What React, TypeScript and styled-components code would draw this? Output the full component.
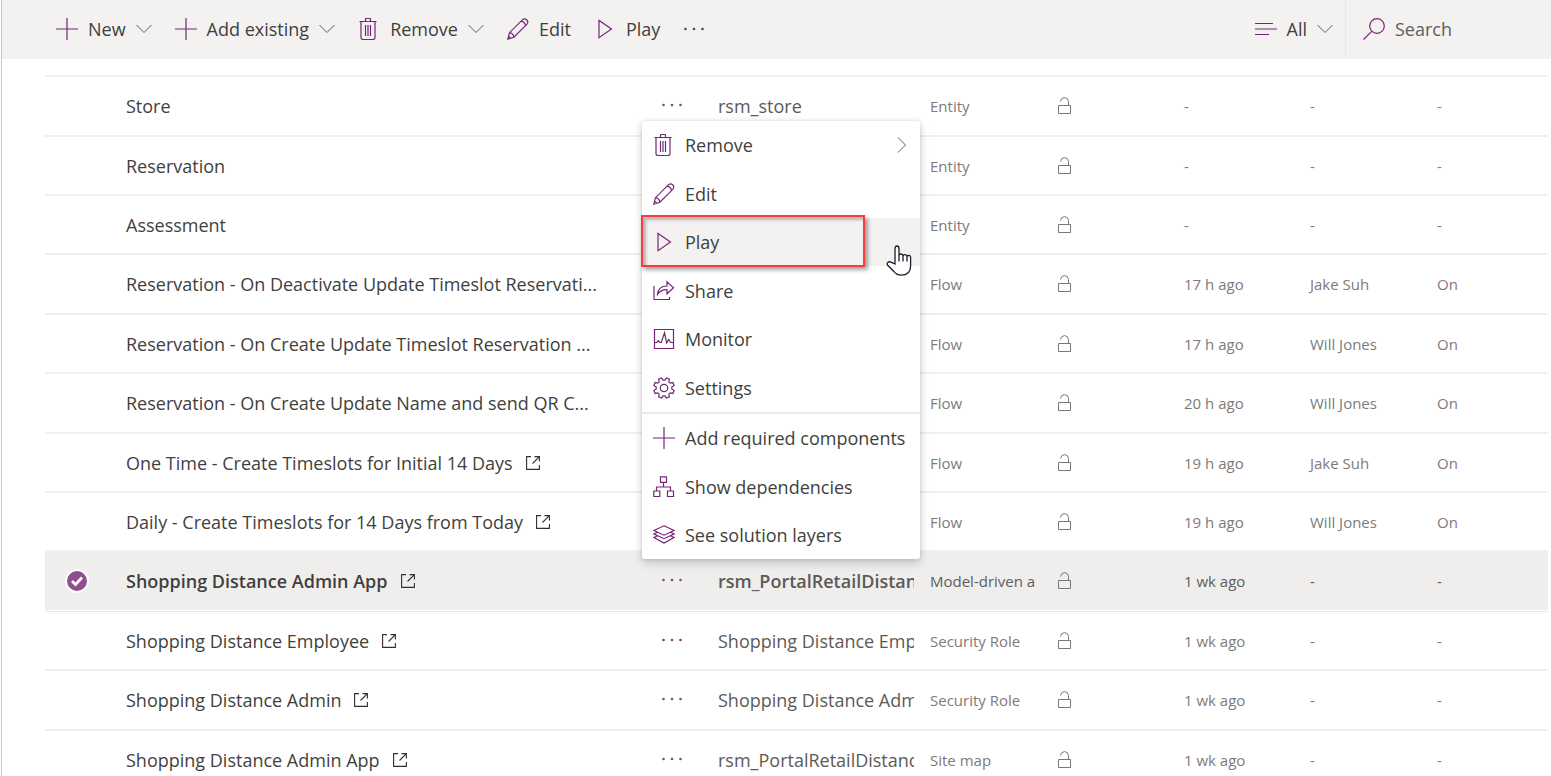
import React from "react";
import styled, { createGlobalStyle, css } from "styled-components";

const GlobalStyle = createGlobalStyle`
  *, *::before, *::after { box-sizing: border-box; }
  body {
    margin: 0;
    background: #fff;
    color: #413f3e;
    font-family: "Open Sans", "Noto Sans", sans-serif;
    font-size: 18px;
    line-height: 24px;
  }
  button, input {
    font: inherit;
    color: inherit;
    border: 0;
    padding: 0;
    margin: 0;
    background: none;
  }
  button { cursor: pointer; }
`;

const PURPLE = "#742774";

const Page = styled.div`
  min-height: 100vh;
  margin-left: 1px;
  border-left: 1px solid #c8c6c4;
`;

const Toolbar = styled.header`
  display: flex;
  align-items: stretch;
  justify-content: space-between;
  height: 59px;
  padding: 0 0 1px 54px;
  background: #f3f2f1;
`;

const Commands = styled.nav`
  display: flex;
  align-items: center;
  gap: 23px;
`;

const Command = styled.button`
  display: flex;
  align-items: center;
  gap: 10px;
  white-space: nowrap;
`;

const Filters = styled.div`
  display: flex;
`;

const FilterButton = styled(Command)`
  padding-right: 12px;
`;

const SearchBox = styled.label`
  display: flex;
  align-items: center;
  gap: 10px;
  width: 206px;
  padding-left: 17px;
  border-left: 1px solid #e8e6e4;
`;

const SearchInput = styled.input`
  width: 140px;
  outline: none;
  &::placeholder { color: #605e5c; opacity: 1; }
`;

const Content = styled.main`
  padding: 16px 3px 0 43px;
  overflow: clip;
  max-height: calc(100vh - 59px);
`;

const Table = styled.table`
  width: 100%;
  table-layout: fixed;
  border-collapse: separate;
  border-spacing: 0;
  border-top: 2px solid #f0efee;
`;

const Col = styled.col<{ $w?: number }>`
  ${(p) => p.$w && css`width: ${p.$w}px;`}
`;

const Cell = styled.td`
  padding: 0;
  vertical-align: middle;
  white-space: nowrap;
  border-bottom: 2px solid #f0efee;
`;

const Row = styled.tr<{ $selected?: boolean }>`
  height: 59px;
  &:nth-child(5n + 1), &:nth-child(5n + 4) { height: 60px; }
  ${(p) => p.$selected && css`
    font-weight: 600;
    & > ${Cell} {
      padding-bottom: 1px;
      border-bottom: 1px solid #edebe9;
      background: #efeeec;
      box-shadow: inset 0 -1px #fff;
    }
  `}
`;

const NameCell = styled(Cell)`
  & svg { margin-left: 13px; }
`;

const NameLink = styled.a`
  color: inherit;
  text-decoration: none;
`;

const MoreCell = styled(Cell)`
  position: relative;
`;

const MoreButton = styled.button`
  display: flex;
  align-items: center;
  justify-content: center;
  width: 44px;
  height: 28px;
  padding-bottom: 2px;
`;

const Clip = styled.span`
  display: block;
  width: 196px;
  overflow: hidden;
  color: #5c5a58;
`;

const MetaCell = styled(Cell)<{ $dark?: boolean }>`
  font-size: 15px;
  font-weight: 400;
  color: ${(p) => (p.$dark ? "#605e5c" : "#7d7b79")};
  & > svg { display: block; }
`;

const Check = styled.input`
  appearance: none;
  display: block;
  width: 24px;
  height: 24px;
  margin-left: 20px;
  border-radius: 50%;
  &:checked {
    border: 2px solid #fff;
    background: #8f4e8f url("data:image/svg+xml,%3Csvg xmlns='http://www.w3.org/2000/svg' viewBox='0 0 20 20'%3E%3Cpath d='M5 10l3.500 3.500 6.500-7' fill='none' stroke='white' stroke-width='2.800'/%3E%3C/svg%3E") center / 20px 20px no-repeat;
  }
`;

const Menu = styled.div`
  position: absolute;
  left: -8px;
  bottom: 52px;
  z-index: 2;
  width: 278px;
  border-radius: 3px;
  background: #fff;
  font-weight: 400;
  box-shadow: 0 4px 10px rgba(0, 0, 0, 0.18), 0 0 4px rgba(0, 0, 0, 0.12);
`;

const MenuGroup = styled.ul`
  list-style: none;
  margin: 0;
  padding: 0;
  & + & { border-top: 2px solid #eae9e8; }
`;

const MenuItem = styled.li<{ $active?: boolean }>`
  position: relative;
  height: 48px;
  background: ${(p) => (p.$active ? "#f3f2f1" : "transparent")};
  &:nth-child(even) { height: 49px; }
`;

const MenuButton = styled.button`
  display: flex;
  align-items: center;
  gap: 10px;
  width: 100%;
  height: 100%;
  padding: 0 13px 0 11px;
  text-align: left;
  white-space: nowrap;
`;

const MenuLabel = styled.span`
  flex: 1;
`;

const Highlight = styled.div`
  position: absolute;
  inset: -3px 55px -1px -1px;
  border: 2px solid #fb3b3b;
  box-shadow: 3px 3px 4px rgba(0, 0, 0, 0.35), inset 3px 3px 3px rgba(0, 0, 0, 0.25);
  pointer-events: none;
`;

const Pointer = styled.svg`
  position: absolute;
  right: 8px;
  top: 26px;
  pointer-events: none;
`;

type IconName =
  | "plus" | "trash" | "pencil" | "play" | "share" | "monitor"
  | "gear" | "tree" | "layers" | "filter" | "search";

const gearPath = (() => {
  const pts: string[] = [];
  for (let i = 0; i < 8; i++) {
    [[-15, 7.9], [-9, 10.4], [9, 10.4], [15, 7.9]].forEach(([d, r]) => {
      const a = ((i * 45 + 22.5 + d) * Math.PI) / 180;
      pts.push(`${(11 + r * Math.cos(a)).toFixed(2)} ${(11 + r * Math.sin(a)).toFixed(2)}`);
    });
  }
  return `M${pts.join("L")}Z`;
})();

const shapes: Record<IconName, React.ReactNode> = {
  plus: <path d="M11 0v22M0 11h22" />,
  trash: <path d="M1.500 3.500h17M7.500 3.500v-2q0-1 1-1h3q1 0 1 1v2M3 3.500v16q0 2 2 2h10q2 0 2-2v-16M7.500 7v11M10 7v11M12.500 7v11" />,
  pencil: <path d="M.8 21.2l1.700-6.500L15.800 1.400q2-1.400 3.800.3 2 1.900.6 4.100L6.900 19.200zM14 3.200q3.800.7 4.600 4.400M2.500 14.700q3.700.7 4.400 4.500M1.600 18.100l2 2" />,
  play: <path d="M5 2.500v17.200l12.500-8.600z" />,
  share: <path d="M1 6v13.500h15.500V17M4.500 14.500c.5-5.500 3.800-8.500 9.500-8.500V1.800l6.500 6-6.500 6V9.700c-4-.2-7 1.300-9.500 4.800z" />,
  monitor: <path d="M1.500 1.500h19v19h-19zM1.500 14.500h2.300l1.500-1.800 1.500 1.800h1.500l3.200-9.700 2.200 10.200 2-3.500 2 3h2.800" />,
  gear: <><path d={gearPath} /><circle cx="11" cy="11" r="3.700" /></>,
  tree: <path d="M7.500 .8h6v5.500h-6zM10.500 6.300v4.700M3.500 15v-4h14v4M.8 15h6v5.500h-6zM14.500 15h6v5.500h-6z" />,
  layers: <path d="M11 1.800l10 4.700-10 4.700L1 6.500zM4.500 8.200L1 10l10 4.700L21 10l-3.500-1.800M4.500 11.800L1 13.500l10 5.500 10-5.500-3.500-1.700" />,
  filter: <path d="M0 5.500h18M0 11h22M0 16.500h14" />,
  search: <><circle cx="14" cy="8" r="7.300" /><path d="M8.700 13.300L.5 21.500" /></>,
};

const Icon = ({ name }: { name: IconName }) => (
  <svg width="22" height="22" viewBox="0 0 22 22" fill="none" stroke={PURPLE} strokeWidth="1.2" aria-hidden="true">
    {shapes[name]}
  </svg>
);

const Chevron = () => (
  <svg width="16" height="10" viewBox="0 0 16 10" fill="none" stroke="#605e5c" aria-hidden="true">
    <path d="M.5 1L8 8.500 15.500 1" />
  </svg>
);

const ChevronRight = () => (
  <svg width="10" height="16" viewBox="0 0 10 16" fill="none" stroke="#605e5c" aria-hidden="true">
    <path d="M1 .5L8.500 8 1 15.500" />
  </svg>
);

const Dots = ({ color }: { color: string }) => (
  <svg width="22" height="4" viewBox="0 0 22 4" fill={color} aria-hidden="true">
    <circle cx="2.500" cy="2" r="1.300" />
    <circle cx="11" cy="2" r="1.300" />
    <circle cx="19.500" cy="2" r="1.300" />
  </svg>
);

const OpenIcon = () => (
  <svg width="14" height="14" viewBox="0 0 14 14" fill="none" stroke="#323130" strokeWidth="1.1" aria-hidden="true">
    <path d="M5 .6H.6v12.800h12.800V9M8.500 .6h4.900v4.900M13.400.6L6.500 7.500" />
  </svg>
);

const Lock = () => (
  <svg width="14" height="18" viewBox="0 0 14 18" fill="none" stroke="#797775" aria-label="Unmanaged" role="img">
    <path d="M.5 8.500h12v8H.5zM2.500 4.500q.5-3.800 4-3.900 3.800.1 4 3.900v4" />
  </svg>
);

type Item = {
  name: string;
  open?: boolean;
  system?: string;
  type: string;
  modified?: string;
  owner?: string;
  status?: string;
  selected?: boolean;
};

const items: Item[] = [
  { name: "Store", system: "rsm_store", type: "Entity" },
  { name: "Reservation", type: "Entity" },
  { name: "Assessment", type: "Entity" },
  { name: "Reservation - On Deactivate Update Timeslot Reservati...", type: "Flow", modified: "17 h ago", owner: "Jake Suh", status: "On" },
  { name: "Reservation - On Create Update Timeslot Reservation ...", type: "Flow", modified: "17 h ago", owner: "Will Jones", status: "On" },
  { name: "Reservation - On Create Update Name and send QR C...", type: "Flow", modified: "20 h ago", owner: "Will Jones", status: "On" },
  { name: "One Time - Create Timeslots for Initial 14 Days", open: true, type: "Flow", modified: "19 h ago", owner: "Jake Suh", status: "On" },
  { name: "Daily - Create Timeslots for 14 Days from Today", open: true, type: "Flow", modified: "19 h ago", owner: "Will Jones", status: "On" },
  { name: "Shopping Distance Admin App", open: true, system: "rsm_PortalRetailDistanc", type: "Model-driven a", modified: "1 wk ago", selected: true },
  { name: "Shopping Distance Employee", open: true, system: "Shopping Distance Emp", type: "Security Role", modified: "1 wk ago" },
  { name: "Shopping Distance Admin", open: true, system: "Shopping Distance Adm", type: "Security Role", modified: "1 wk ago" },
  { name: "Shopping Distance Admin App", open: true, system: "rsm_PortalRetailDistance", type: "Site map", modified: "1 wk ago" },
];

const menuGroups: { icon: IconName; label: string; submenu?: boolean; active?: boolean }[][] = [
  [
    { icon: "trash", label: "Remove", submenu: true },
    { icon: "pencil", label: "Edit" },
    { icon: "play", label: "Play", active: true },
    { icon: "share", label: "Share" },
    { icon: "monitor", label: "Monitor" },
    { icon: "gear", label: "Settings" },
  ],
  [
    { icon: "plus", label: "Add required components" },
    { icon: "tree", label: "Show dependencies" },
    { icon: "layers", label: "See solution layers" },
  ],
];

const commands: { icon: IconName; label: string; split?: boolean }[] = [
  { icon: "plus", label: "New", split: true },
  { icon: "plus", label: "Add existing", split: true },
  { icon: "trash", label: "Remove", split: true },
  { icon: "pencil", label: "Edit" },
  { icon: "play", label: "Play" },
];

const ContextMenu = () => (
  <Menu>
    {menuGroups.map((group, g) => (
      <MenuGroup key={g}>
        {group.map((item) => (
          <MenuItem key={item.label} $active={item.active}>
            <MenuButton type="button">
              <Icon name={item.icon} />
              <MenuLabel>{item.label}</MenuLabel>
              {item.submenu && <ChevronRight />}
            </MenuButton>
            {item.active && (
              <>
                <Highlight />
                <Pointer width="26" height="34" viewBox="0 0 26 34" fill="#fff" stroke="#1b1b2b" strokeWidth="1.3">
                  <path d="M9 20V4.500q0-2.500 2-2.500t2 2.500V11.500q.2-1.500 2-1.500t2 2q.2-1.400 2-1.400t2 2q.2-1.200 1.900-1.200 1.700.1 1.700 1.800v8.500q0 9.500-9.500 9.500-4.500 0-7.500-4L1.500 21q-1-1.500.3-2.600 1.500-1.200 3.200-.2zM13 11.500v6M17 12v5.500M21 12.600v5" />
                </Pointer>
              </>
            )}
          </MenuItem>
        ))}
      </MenuGroup>
    ))}
  </Menu>
);

export default function App() {
  return (
    <Page>
      <GlobalStyle />
      <Toolbar>
        <Commands aria-label="Commands">
          {commands.map((c) => (
            <Command type="button" key={c.label}>
              <Icon name={c.icon} />
              <span>{c.label}</span>
              {c.split && <Chevron />}
            </Command>
          ))}
          <Command type="button" aria-label="More commands">
            <Dots color="#504e4c" />
          </Command>
        </Commands>
        <Filters>
          <FilterButton type="button">
            <Icon name="filter" />
            <span>All</span>
            <Chevron />
          </FilterButton>
          <SearchBox>
            <Icon name="search" />
            <SearchInput type="text" placeholder="Search" aria-label="Search" />
          </SearchBox>
        </Filters>
      </Toolbar>
      <Content>
        <Table>
          <colgroup>
            <Col $w={81} />
            <Col />
            <Col $w={68} />
            <Col $w={212} />
            <Col $w={128} />
            <Col $w={126} />
            <Col $w={126} />
            <Col $w={127} />
            <Col $w={111} />
          </colgroup>
          <tbody>
            {items.map((item, i) => (
              <Row key={i} $selected={item.selected}>
                <Cell>
                  <Check type="checkbox" aria-label={`Select ${item.name}`} defaultChecked={item.selected} />
                </Cell>
                <NameCell>
                  <NameLink href="#">
                    {item.name}
                    {item.open && <OpenIcon />}
                  </NameLink>
                </NameCell>
                <MoreCell>
                  <MoreButton type="button" aria-label="More actions">
                    <Dots color="#864386" />
                  </MoreButton>
                  {item.selected && <ContextMenu />}
                </MoreCell>
                <Cell>
                  <Clip>{item.system}</Clip>
                </Cell>
                <MetaCell $dark={item.selected}>{item.type}</MetaCell>
                <MetaCell>
                  <Lock />
                </MetaCell>
                <MetaCell $dark={item.selected}>{item.modified ?? "-"}</MetaCell>
                <MetaCell $dark={item.selected}>{item.owner ?? "-"}</MetaCell>
                <MetaCell $dark={item.selected}>{item.status ?? "-"}</MetaCell>
              </Row>
            ))}
          </tbody>
        </Table>
      </Content>
    </Page>
  );
}
